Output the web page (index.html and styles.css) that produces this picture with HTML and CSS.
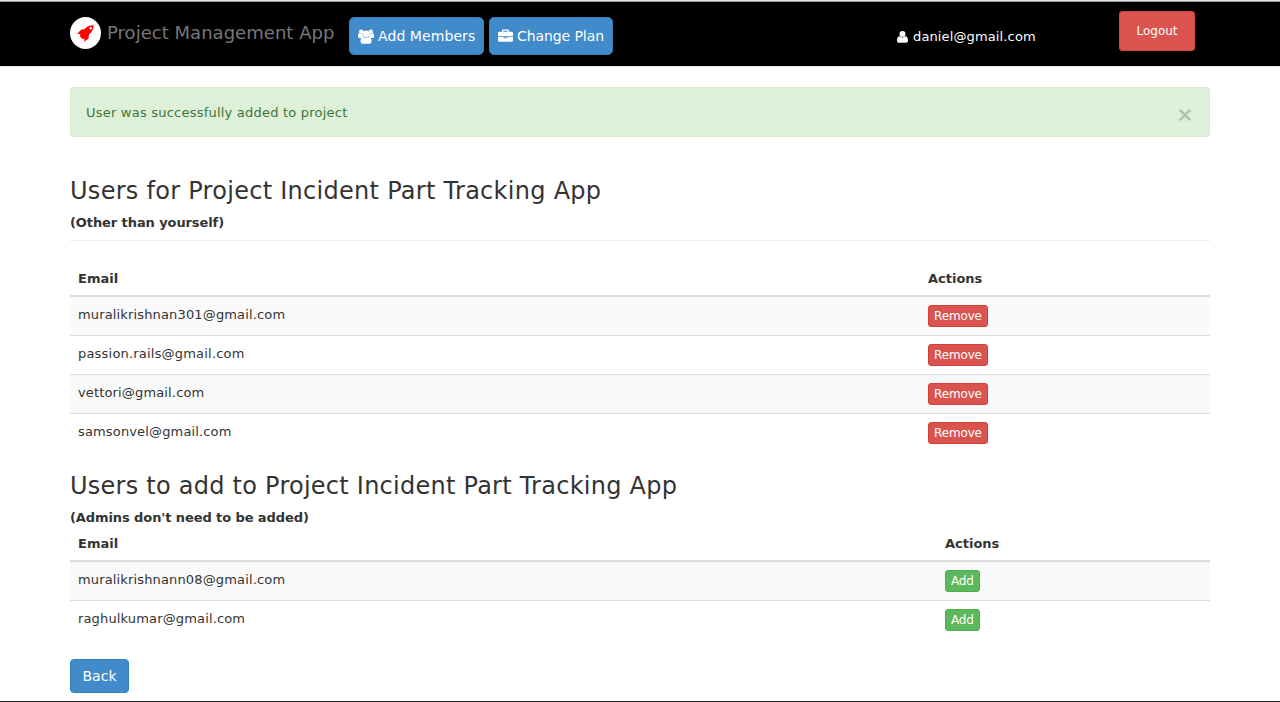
FILE: index.html
```html
<!DOCTYPE html>
<html lang="en">
<head>
<meta charset="utf-8">
<title>Project Management App</title>
<link rel="stylesheet" href="styles.css">
</head>
<body>
<header class="navbar">
  <div class="container nav-row">
    <span class="logo"><svg width="17" height="17" viewBox="0 0 17 17"><path fill="#f00" fill-rule="evenodd" d="M16.700.300C12.700.2 9.800 1.500 7.300 4.200L4 4.700.2 8.900l3.400.2-1 2 3.100 3.100 1.500-.9.100 3.500 4.200-3.300.4-3.800c2.900-2.300 4.600-5.200 4.800-9.400zM13.700 2.100a1.200 1.200 0 1 1 0 2.400 1.200 1.200 0 0 1 0-2.400z"/></svg></span>
    <span class="brand">Project Management App</span>
    <a class="btn nav-btn members"><svg width="16" height="15" viewBox="0 0 16 15"><g fill="#fff"><circle cx="3.200" cy="2.700" r="2.200"/><circle cx="12.800" cy="2.700" r="2.200"/><circle cx="8" cy="4.900" r="3.300"/><path d="M0 8V6q0-1.700 1-1.700 1 .7 2.200.7l1.200-.2q0 1.900.9 3.100-1.400 0-2.400 1.100H1.300Q0 8.900 0 8zM16 8V6q0-1.700-1-1.700-1 .7-2.200.7l-1.200-.2q0 1.900-.9 3.100 1.400 0 2.400 1.100h1.600Q16 8.900 16 8zM4.600 8h.7Q6.500 8.700 8 8.700T10.700 8h.7q2.100 0 2.100 4.500 0 2.200-2 2.200h-7q-2 0-2-2.200Q2.500 8 4.600 8z"/></g></svg><span>Add Members</span></a>
    <a class="btn nav-btn plan"><svg width="15" height="14" viewBox="0 0 15 14"><path fill="#fff" fill-rule="evenodd" d="M4 2.700V1.500Q4 .6 5 .6h5q1 0 1 .9v1.200h2.500Q15 2.700 15 4v3H0V4q0-1.300 1.500-1.300zm1.300 0h4.400v-.9H5.300zM0 7.700h5.700v1.500h3.600V7.700H15v3.900q0 1.200-1.500 1.200h-12Q0 12.800 0 11.600zm6.500 0h2v.8h-2z"/></svg><span>Change Plan</span></a>
    <a class="user"><svg width="11" height="12" viewBox="0 0 11 12"><path fill="#fff" d="M5.500 0a3 3 0 1 1 0 6 3 3 0 0 1 0-6zM2.700 5.300q1.200 1.100 2.800 1.100t2.800-1.100Q11 5.400 11 9.700q0 2-1.900 2H1.900q-1.900 0-1.900-2 0-4.300 2.700-4.400z"/></svg><span>daniel@gmail.com</span></a>
    <a class="btn danger logout"><span>Logout</span></a>
  </div>
</header>
<main class="container">
  <div class="alert"><span class="alert-text">User was successfully added to project</span><svg class="close" width="12" height="12" viewBox="0 0 12 12"><path d="M.7.7l10.600 10.600M11.300.7L.7 11.300" stroke="#b1bfac" stroke-width="2.300"/></svg></div>
  <h3><span class="title-one">Users for Project Incident Part Tracking App</span></h3>
  <p class="note">(Other than yourself)</p>
  <hr>
  <table class="current">
    <thead><tr><th class="email-col">Email</th><th>Actions</th></tr></thead>
    <tbody>
      <tr><td class="email">muralikrishnan301@gmail.com</td><td><a class="btn danger xs"><span>Remove</span></a></td></tr>
      <tr><td class="email wide">passion.rails@gmail.com</td><td><a class="btn danger xs"><span>Remove</span></a></td></tr>
      <tr><td class="email">vettori@gmail.com</td><td><a class="btn danger xs"><span>Remove</span></a></td></tr>
      <tr><td class="email">samsonvel@gmail.com</td><td><a class="btn danger xs"><span>Remove</span></a></td></tr>
    </tbody>
  </table>
  <h3 class="second"><span class="title-two">Users to add to Project Incident Part Tracking App</span></h3>
  <p class="note">(Admins don't need to be added)</p>
  <table class="available">
    <thead><tr><th class="email-col">Email</th><th>Actions</th></tr></thead>
    <tbody>
      <tr><td class="email">muralikrishnann08@gmail.com</td><td><a class="btn success xs"><span>Add</span></a></td></tr>
      <tr><td class="email">raghulkumar@gmail.com</td><td><a class="btn success xs"><span>Add</span></a></td></tr>
    </tbody>
  </table>
  <a class="btn back"><span>Back</span></a>
</main>
<footer class="edge"></footer>
</body>
</html>
```
FILE: styles.css
```css
* { box-sizing: border-box; }
body { margin: 0; height: 702px; overflow: hidden; display: flex; flex-direction: column; background: #fff; color: #333; font: 13px/18px Verdana, "DejaVu Sans", sans-serif; }
.container { width: 1140px; margin: 0 auto; }
.navbar { flex: none; height: 67px; background: #000; border-top: 1px solid #e1e5e5; border-bottom: 1px solid #e7e7e7; box-shadow: inset 0 1px #9a9e9f; }
.nav-row { display: flex; align-items: flex-start; }
.logo { width: 31px; height: 32px; margin-top: 16px; border-radius: 50%; background: #fff; display: flex; align-items: center; justify-content: center; }
.brand { width: 242px; margin: 22px 0 0 6px; font-size: 18px; line-height: 20px; letter-spacing: .03px; color: #777; white-space: nowrap; }
.btn { display: inline-flex; align-items: center; justify-content: center; color: #fff; background: #428bca; border: 1px solid #357ebd; border-radius: 4px; font-size: 14px; line-height: 20px; white-space: nowrap; }
.nav-btn { height: 38px; margin-top: 16px; gap: 4px; border-radius: 5px; justify-content: flex-start; padding-left: 8px; }
.members { width: 135px; letter-spacing: .08px; }
.plan { width: 124px; margin-left: 5px; letter-spacing: -.08px; }
.user { display: flex; align-items: center; gap: 5px; width: 222px; margin: 27px 0 0 284px; color: #fff; letter-spacing: .13px; }
.danger { background: #d9534f; border-color: #d43f3a; }
.success { background: #5cb85c; border-color: #4cae4c; }
.logout { width: 76px; height: 40px; margin-top: 10px; border-radius: 3px; font-size: 12px; }
.alert { display: flex; justify-content: space-between; height: 50px; margin-top: 20px; padding: 16px 18px 0 15px; background: #dff0d8; border: 1px solid #d6e9c6; border-radius: 4px; color: #3c763d; letter-spacing: .22px; }
.close { margin-top: 5px; }
h3 { margin: 41px 0 0; font-size: 24px; font-weight: 400; line-height: 26px; white-space: nowrap; }
.title-one { letter-spacing: .28px; }
.title-two { letter-spacing: .25px; }
.note { margin: 10px 0 0; font-weight: 700; letter-spacing: -.09px; }
hr { height: 1px; margin: 8px 0 19px; border: 0; background: #eee; }
table { width: 100%; table-layout: fixed; border-spacing: 0; }
.available { margin-top: -2px; }
.current .email-col { width: 850px; }
.available .email-col { width: 867px; }
th, td { padding: 8px 8px 0; text-align: left; vertical-align: top; }
th { height: 37px; padding-top: 10px; border-bottom: 2px solid #ddd; }
td { height: 39px; border-top: 1px solid #ddd; }
td.email { padding-top: 9px; letter-spacing: .15px; }
td.wide { letter-spacing: .2px; }
tbody tr:first-child td { height: 38px; border-top: 0; }
tbody tr:nth-child(odd) { background: #f9f9f9; }
.xs { height: 22px; border-radius: 3px; font-size: 12px; vertical-align: top; padding: 0 5px; letter-spacing: -.14px; }
.second { margin-top: 21px; }
.back { width: 59px; height: 34px; margin-top: 20px; }
.edge { height: 1px; margin-top: auto; background: #22262b; }
```
